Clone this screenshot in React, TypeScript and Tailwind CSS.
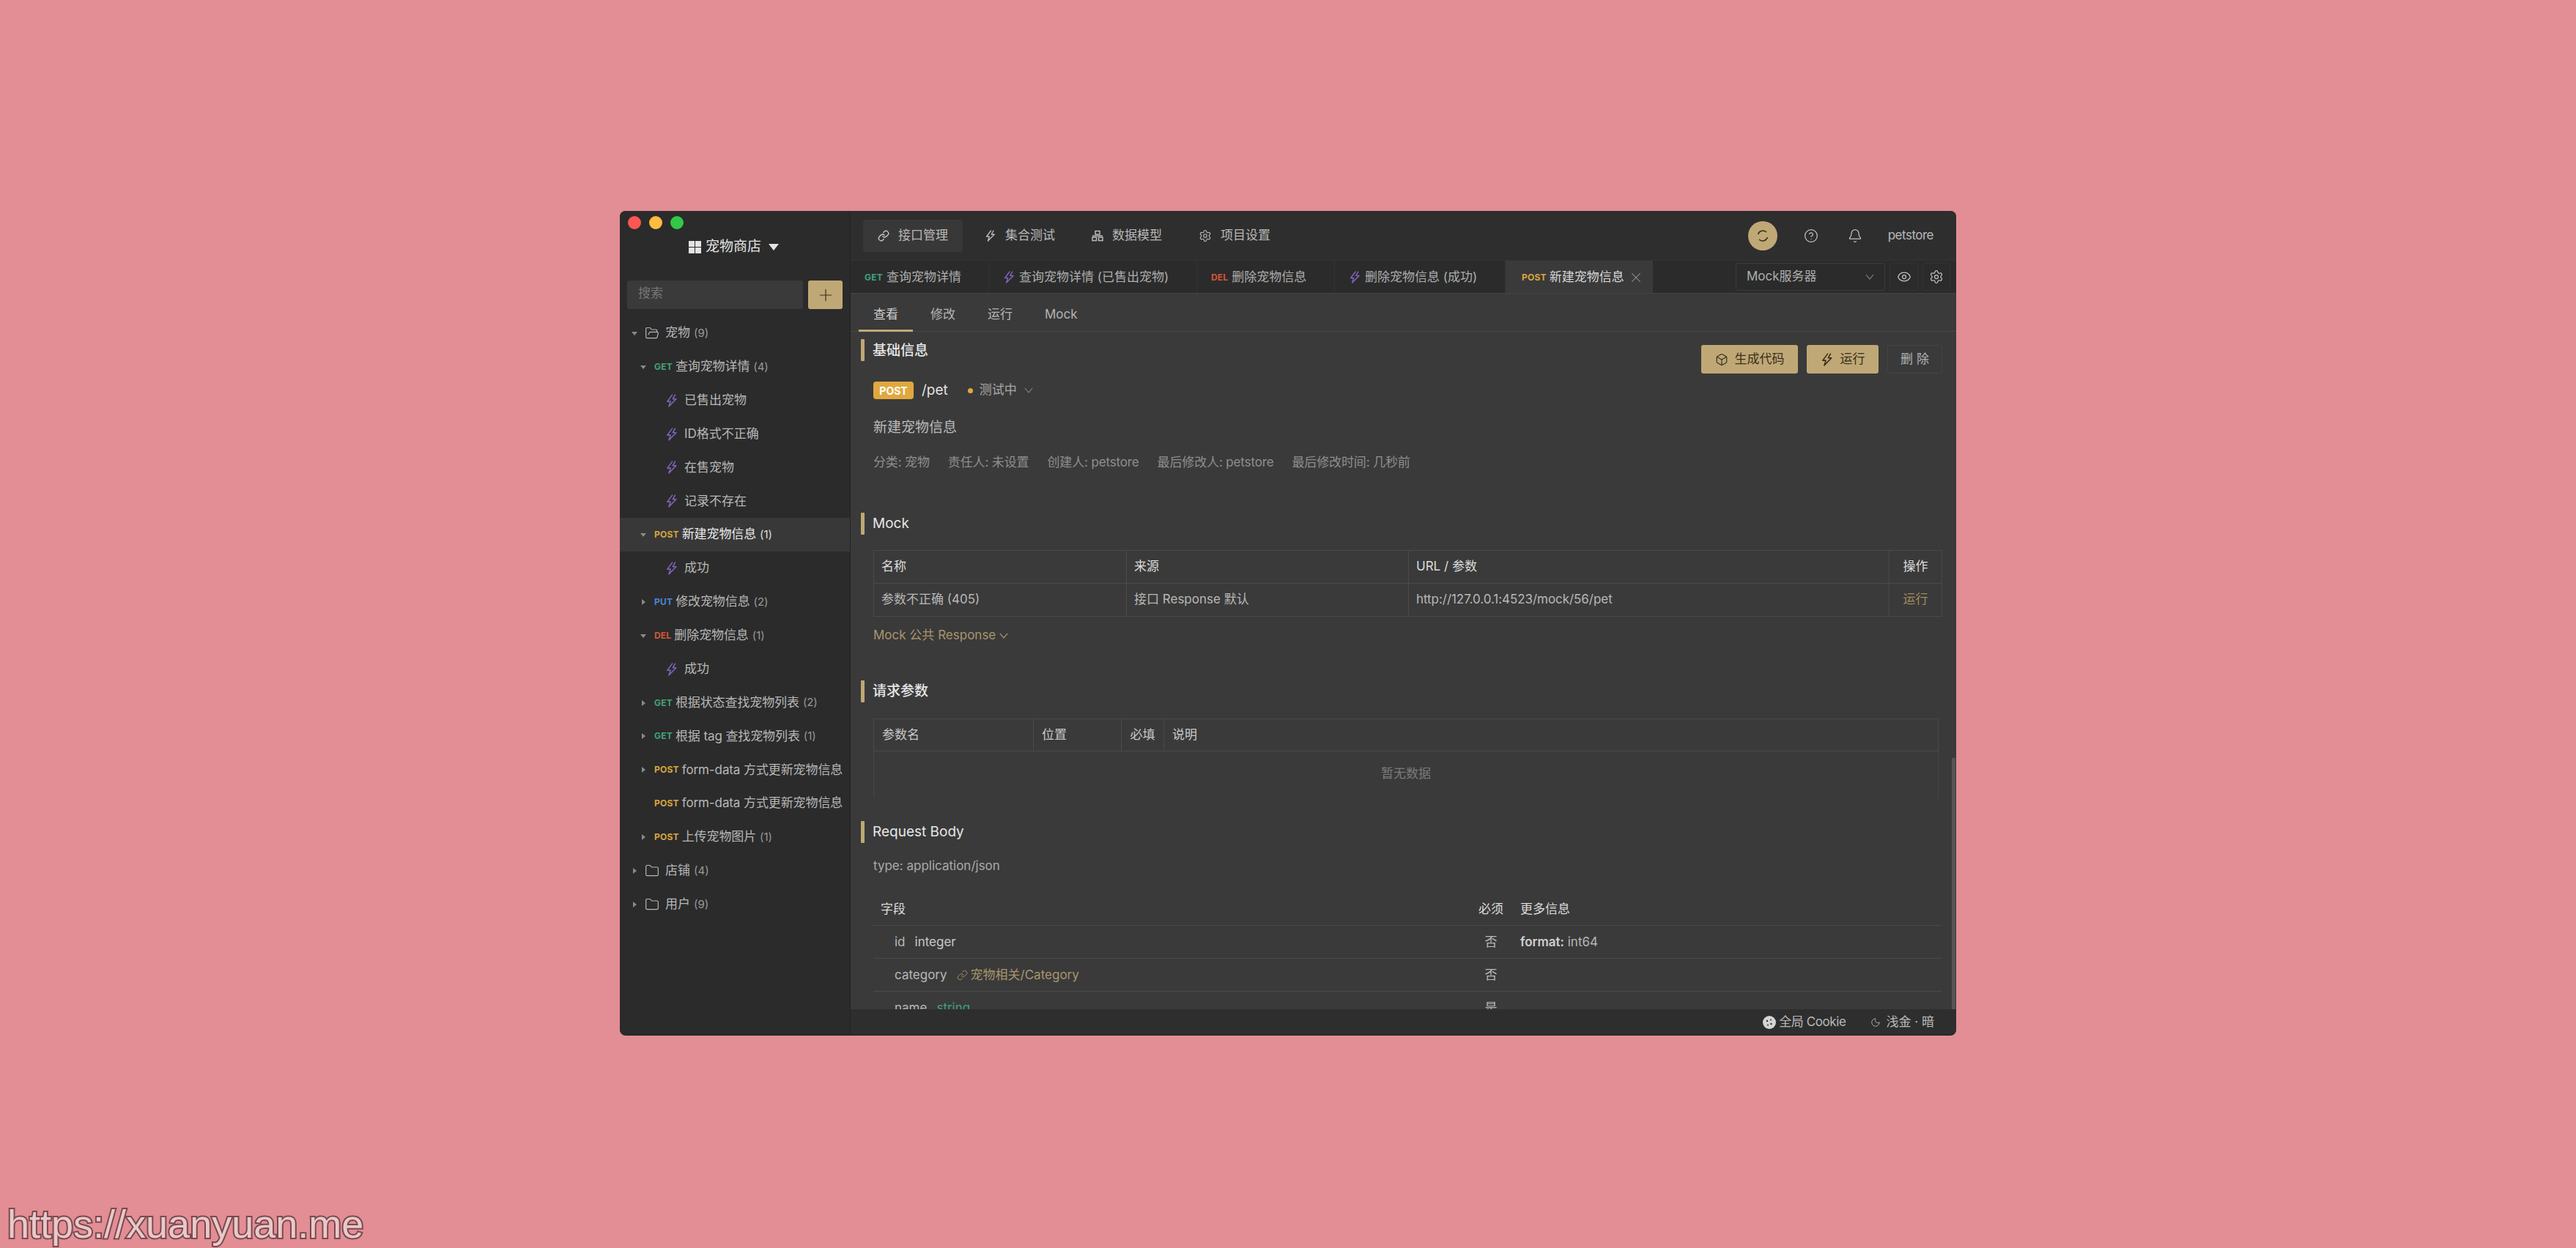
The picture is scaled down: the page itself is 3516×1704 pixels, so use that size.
import React from 'react';
import { Bell, Box, CircleHelp, Eye, Folder, FolderOpen, Link as LinkIcon, Moon, Plus, Settings, X } from 'lucide-react';

const METHOD_COLORS: Record<string, string> = {
    GET: 'text-[#3fa37c]',
    POST: 'text-[#d8a63f]',
    PUT: 'text-[#4a86d8]',
    DEL: 'text-[#d4553a]',
};

const Bolt: React.FC<{ className?: string }> = ({ className }) => (
    <svg className={className} viewBox="0 0 16 16" fill="none" stroke="currentColor" strokeWidth="1.4" strokeLinejoin="round" strokeLinecap="round">
        <path d="M8.5 1 2.5 9h3.8L4.4 15 13.2 6H9.2L12 1" />
    </svg>
);

const Chevron: React.FC<{ className?: string }> = ({ className }) => (
    <svg className={`w-[12px] h-[8px] shrink-0 ${className ?? ''}`} viewBox="0 0 12 8" fill="none" stroke="currentColor" strokeWidth="1.2">
        <path d="M.8.8 6 7 11.2.8" />
    </svg>
);

const Caret: React.FC<{ open: boolean }> = ({ open }) => (
    <svg className="w-[10px] h-[10px] text-[#8a8a8a] shrink-0" viewBox="0 0 10 10" fill="currentColor">
        {open ? <path d="M1 3h8L5 8z" /> : <path d="M3 1v8l5-4z" />}
    </svg>
);

const Method: React.FC<{ name: string }> = ({ name }) => (
    <span className={`text-[12px] font-bold tracking-[0.2px] shrink-0 ${METHOD_COLORS[name]}`}>{name}</span>
);

type SidebarRow =
    | { kind: 'folder'; name: string; count: number; open: boolean }
    | { kind: 'api'; method: string; name: string; count?: number; open?: boolean; active?: boolean }
    | { kind: 'case'; name: string };

const sidebarRows: SidebarRow[] = [
    { kind: 'folder', name: '宠物', count: 9, open: true },
    { kind: 'api', method: 'GET', name: '查询宠物详情', count: 4, open: true },
    { kind: 'case', name: '已售出宠物' },
    { kind: 'case', name: 'ID格式不正确' },
    { kind: 'case', name: '在售宠物' },
    { kind: 'case', name: '记录不存在' },
    { kind: 'api', method: 'POST', name: '新建宠物信息', count: 1, open: true, active: true },
    { kind: 'case', name: '成功' },
    { kind: 'api', method: 'PUT', name: '修改宠物信息', count: 2, open: false },
    { kind: 'api', method: 'DEL', name: '删除宠物信息', count: 1, open: true },
    { kind: 'case', name: '成功' },
    { kind: 'api', method: 'GET', name: '根据状态查找宠物列表', count: 2, open: false },
    { kind: 'api', method: 'GET', name: '根据 tag 查找宠物列表', count: 1, open: false },
    { kind: 'api', method: 'POST', name: 'form-data 方式更新宠物信息', open: false },
    { kind: 'api', method: 'POST', name: 'form-data 方式更新宠物信息' },
    { kind: 'api', method: 'POST', name: '上传宠物图片', count: 1, open: false },
    { kind: 'folder', name: '店铺', count: 4, open: false },
    { kind: 'folder', name: '用户', count: 9, open: false },
];

const Sidebar: React.FC = () => (
    <aside className="w-[314px] shrink-0 bg-[#2b2b2b] flex flex-col">
        <div className="flex gap-[11px] pt-[7px] pl-[11px]">
            <span className="w-[18px] h-[18px] rounded-full bg-[#fc5753]" />
            <span className="w-[18px] h-[18px] rounded-full bg-[#fdbc40]" />
            <span className="w-[18px] h-[18px] rounded-full bg-[#33c748]" />
        </div>
        <div className="mt-[12px] h-[24px] pl-[94px] flex items-center text-[19px] text-[#e4e4e4]">
            <svg className="w-[17px] h-[17px] mr-[6px]" viewBox="0 0 17 17" fill="currentColor">
                <rect width="8" height="8" />
                <rect x="9" width="8" height="8" />
                <rect y="9" width="8" height="8" />
                <rect x="9" y="9" width="8" height="8" />
            </svg>
            宠物商店
            <svg className="w-[14px] h-[10px] ml-[10px]" viewBox="0 0 14 10" fill="currentColor"><path d="M0 1h14L7 10z" /></svg>
        </div>
        <div className="mt-[34px] px-[10px] flex gap-[7px]">
            <div className="w-[241px] h-[39px] bg-[#3a3a3a] rounded-[3px] pl-[15px] pb-[3px] flex items-center text-[17px] text-[#777]">搜索</div>
            <div className="w-[47px] h-[39px] bg-[#bfa876] rounded-[3px] flex items-center justify-center text-[#3a2f1a]">
                <Plus size={26} strokeWidth={1.1} />
            </div>
        </div>
        <div className="mt-[10px] flex flex-col">
            {sidebarRows.map((row, i) => {
                if (row.kind === 'folder') {
                    const Icon = row.open ? FolderOpen : Folder;
                    return (
                        <div key={i} className="h-[45.88px] flex items-center pl-[15px] text-[17px] text-[#b8b8b8]">
                            <Caret open={row.open} />
                            <Icon className="w-[20px] h-[20px] ml-[9px] mr-[8px]" strokeWidth={1.4} />
                            {row.name}
                            <span className="ml-[5px] text-[15px] text-[#999]">({row.count})</span>
                        </div>
                    );
                }
                if (row.kind === 'api') {
                    return (
                        <div key={i} className={`h-[45.88px] flex items-center pl-[27px] whitespace-nowrap text-[17px] tracking-[-0.1px] ${row.active ? 'bg-[#383838] text-[#ececec]' : 'text-[#b8b8b8]'}`}>
                            {row.open === undefined ? <span className="w-[10px] shrink-0" /> : <Caret open={row.open} />}
                            <span className="ml-[10px] mr-[4px] flex"><Method name={row.method} /></span>
                            {row.name}
                            {row.count !== undefined && <span className={`ml-[5px] text-[15px] ${row.active ? 'text-[#ddd]' : 'text-[#999]'}`}>({row.count})</span>}
                        </div>
                    );
                }
                return (
                    <div key={i} className="h-[45.88px] flex items-center pl-[62px] text-[17px] text-[#b8b8b8]">
                        <Bolt className="w-[18px] h-[18px] text-[#7f63b8] mr-[8px]" />
                        {row.name}
                    </div>
                );
            })}
        </div>
    </aside>
);

const ModelIcon: React.FC = () => (
    <svg className="w-[16px] h-[16px]" viewBox="0 0 16 16" fill="none" stroke="currentColor" strokeWidth="1.5">
        <rect x="5" y="1.5" width="6" height="4.5" />
        <rect x="1" y="10" width="5.5" height="4.5" />
        <rect x="9.5" y="10" width="5.5" height="4.5" />
        <path d="M1 8h14" />
    </svg>
);

const navItems = [
    { label: '接口管理', icon: <LinkIcon size={16} strokeWidth={1.9} className="text-[#d0d0d0]" />, active: true },
    { label: '集合测试', icon: <Bolt className="w-[16px] h-[16px]" /> },
    { label: '数据模型', icon: <ModelIcon /> },
    { label: '项目设置', icon: <Settings size={18} strokeWidth={1.5} /> },
];

const TopBar: React.FC = () => (
    <div className="h-[67px] shrink-0 flex items-center pl-[17px] pr-[31px] bg-[#2e2e2e]">
        <div className="flex gap-[10px]">
            {navItems.map((item) => (
                <div key={item.label} className={`h-[44px] flex items-center gap-[12px] px-[20px] rounded-[4px] text-[17px] text-[#b9b9b9] ${item.active ? 'bg-[#383838]' : ''}`}>
                    {item.icon}
                    {item.label}
                </div>
            ))}
        </div>
        <div className="ml-auto flex items-center">
            <div className="w-[40px] h-[40px] rounded-full bg-[#bfa876] flex items-center justify-center">
                <svg className="w-[20px] h-[20px] text-[#3a2f1a]" viewBox="0 0 20 20" fill="none" stroke="currentColor" strokeWidth="1.5">
                    <path d="M3.5 8A7 7 0 0 1 15 5" />
                    <path d="M16.5 12A7 7 0 0 1 5 15" />
                </svg>
            </div>
            <CircleHelp className="ml-[36px] text-[#c4c4c4]" size={20} strokeWidth={1.5} />
            <Bell className="ml-[40px] text-[#c4c4c4]" size={20} strokeWidth={1.5} />
            <span className="ml-[35px] text-[17px] text-[#b9b9b9] tracking-[-0.5px]">petstore</span>
        </div>
    </div>
);

const tabs = [
    { method: 'GET', label: '查询宠物详情', width: 'w-[189px]' },
    { label: '查询宠物详情 (已售出宠物)', width: 'w-[284px]' },
    { method: 'DEL', label: '删除宠物信息', width: 'w-[188px]' },
    { label: '删除宠物信息 (成功)', width: 'w-[233px]' },
];

const TabBar: React.FC = () => (
    <div className="h-[45px] shrink-0 flex bg-[#2b2b2b] border-t border-[#333]">
        {tabs.map((tab) => (
            <div key={tab.label} className={`${tab.width} flex items-center pl-[19px] pt-[1px] gap-[5px] text-[17px] text-[#aeaeae] border-r border-[#333] whitespace-nowrap`}>
                {tab.method ? <Method name={tab.method} /> : <Bolt className="w-[17px] h-[17px] text-[#7f63b8]" />}
                {tab.label}
            </div>
        ))}
        <div className="w-[201px] flex items-center pl-[22px] pt-[1px] gap-[4px] text-[17px] text-[#d8d8d8] bg-[#3a3a3a] whitespace-nowrap">
            <Method name="POST" />
            新建宠物信息
            <X className="ml-[1px] text-[#9a9a9a]" size={22} strokeWidth={1.1} />
        </div>
        <div className="ml-auto flex items-center pr-[8px] gap-[6px]">
            <div className="w-[204px] h-[38px] border border-[#3c3c3c] rounded-[3px] pl-[14px] pr-[14px] flex items-center justify-between text-[17px] text-[#aeaeae]">
                Mock服务器
                <Chevron className="text-[#777]" />
            </div>
            <div className="w-[39px] h-[38px] border border-[#333] rounded-[3px] flex items-center justify-center text-[#c4c4c4]"><Eye size={20} strokeWidth={1.5} /></div>
            <div className="w-[38px] h-[38px] border border-[#333] rounded-[3px] flex items-center justify-center text-[#c4c4c4]"><Settings size={20} strokeWidth={1.5} /></div>
        </div>
    </div>
);

const SubTabs: React.FC = () => (
    <div className="h-[53px] shrink-0 flex items-stretch gap-[4px] pl-[11px] bg-[#3a3a3a] border-t border-[#444] border-b border-b-[#474747] text-[17px] text-[#b4b4b4]">
        <div className="px-[20px] pt-[8px] flex items-center text-[#d0d0d0] border-b-[3px] border-[#bfa876] -mb-[1px]">查看</div>
        <div className="px-[20px] pt-[7px] flex items-center">修改</div>
        <div className="px-[20px] pt-[7px] flex items-center">运行</div>
        <div className="px-[20px] pt-[7px] flex items-center">Mock</div>
    </div>
);

const SectionTitle: React.FC<{ children: React.ReactNode; weight?: string; offset?: string }> = ({ children, weight = 'font-medium', offset = '' }) => (
    <div className={`h-[30px] flex items-center gap-[11px] text-[19px] text-[#e6e6e6] whitespace-nowrap ${weight}`}>
        <span className="w-[5px] h-[30px] bg-[#bfa876] rounded-[1px]" />
        <span className={offset}>{children}</span>
    </div>
);

const Detail: React.FC = () => (
    <div className="flex-1 min-h-0 relative overflow-hidden bg-[#3a3a3a]">
        <div className="absolute right-[1px] top-[582px] bottom-0 w-[5px] bg-[#555]" />
        <div className="pt-[10px] pl-[14px] pr-[19px]">
            <div className="flex justify-between items-start h-[30px]">
                <SectionTitle offset="pt-[2px]">基础信息</SectionTitle>
                <div className="flex gap-[12px] mt-[8px] text-[17px]">
                    <div className="w-[132px] h-[39px] bg-[#bfa876] rounded-[3px] flex items-center justify-center gap-[9px] text-[#3a2f1a]">
                        <Box size={18} strokeWidth={1.6} />
                        生成代码
                    </div>
                    <div className="w-[98px] h-[39px] bg-[#bfa876] rounded-[3px] flex items-center justify-center gap-[9px] text-[#3a2f1a]">
                        <Bolt className="w-[18px] h-[18px]" />
                        运行
                    </div>
                    <div className="w-[75px] h-[39px] border border-[#444] rounded-[3px] flex items-center justify-center text-[#b4b4b4]">删 除</div>
                </div>
            </div>

            <div className="mt-[28px] ml-[17px] h-[24px] flex items-center whitespace-nowrap">
                <span className="w-[55px] h-[24px] rounded-[4px] bg-[#e0a83e] text-white text-[14px] font-bold flex items-center justify-center">POST</span>
                <span className="ml-[11px] text-[19px] text-[#e0e0e0]">/pet</span>
                <span className="ml-[27px] w-[7px] h-[7px] rounded-full bg-[#e0a83e]" />
                <span className="ml-[9px] text-[17px] text-[#a8a8a8]">测试中</span>
                <Chevron className="ml-[10px] text-[#777]" />
            </div>

            <div className="mt-[25px] ml-[17px] h-[28px] flex items-center text-[19px] text-[#bcbcbc]">新建宠物信息</div>

            <div className="mt-[22px] ml-[17px] h-[24px] flex items-center gap-[25px] text-[17px] text-[#8f8f8f] whitespace-nowrap tracking-[-0.14px]">
                <span>分类: 宠物</span>
                <span>责任人: 未设置</span>
                <span>创建人: petstore</span>
                <span>最后修改人: petstore</span>
                <span>最后修改时间: 几秒前</span>
            </div>

            <div className="mt-[56px]">
                <SectionTitle weight="font-normal">Mock</SectionTitle>
            </div>
            <table className="mt-[21px] ml-[17px] w-[1458px] table-fixed border-collapse text-[17px] text-[#b8b8b8]">
                <colgroup>
                    <col className="w-[345px]" />
                    <col className="w-[385px]" />
                    <col className="w-[656px]" />
                    <col className="w-[72px]" />
                </colgroup>
                <tbody>
                    <tr className="h-[45px] text-[#dcdcdc]">
                        <td className="border border-[#4a4a4a] pl-[10px]">名称</td>
                        <td className="border border-[#4a4a4a] pl-[10px]">来源</td>
                        <td className="border border-[#4a4a4a] pl-[10px]">URL / 参数</td>
                        <td className="border border-[#4a4a4a] text-center">操作</td>
                    </tr>
                    <tr className="h-[45px]">
                        <td className="border border-[#4a4a4a] pl-[10px]">参数不正确 (405)</td>
                        <td className="border border-[#4a4a4a] pl-[10px]">接口 Response 默认</td>
                        <td className="border border-[#4a4a4a] pl-[10px] tracking-[-0.05px]">http://127.0.0.1:4523/mock/56/pet</td>
                        <td className="border border-[#4a4a4a] text-center text-[#a08c5f]">运行</td>
                    </tr>
                </tbody>
            </table>
            <div className="mt-[14px] ml-[17px] h-[24px] flex items-center gap-[5px] text-[17px] text-[#a8966c]">
                Mock 公共 Response
                <Chevron />
            </div>

            <div className="mt-[49px]">
                <SectionTitle offset="pt-[1px]">请求参数</SectionTitle>
            </div>
            <div className="mt-[22px] ml-[17px] w-[1454px] text-[17px] text-[#c8c8c8]">
                <div className="h-[45px] flex border border-[#4a4a4a]">
                    <div className="w-[218px] border-r border-[#4a4a4a] pl-[11px] flex items-center">参数名</div>
                    <div className="w-[120px] border-r border-[#4a4a4a] pl-[11px] flex items-center">位置</div>
                    <div className="w-[58px] border-r border-[#4a4a4a] flex items-center justify-center">必填</div>
                    <div className="pl-[11px] flex items-center">说明</div>
                </div>
                <div className="h-[63px] pb-[2px] border-x border-[#454545] flex items-center justify-center text-[#7c7c7c]">暂无数据</div>
            </div>

            <div className="mt-[32px]">
                <SectionTitle weight="font-normal">Request Body</SectionTitle>
            </div>
            <div className="mt-[20px] ml-[17px] h-[24px] flex items-center text-[17px] text-[#aaa]">type: application/json</div>

            <div className="mt-[24px] ml-[17px] w-[1458px] text-[17px] text-[#b8b8b8]">
                <div className="h-[45px] pt-[1px] flex items-center border-b border-[#4a4a4a] text-[#dcdcdc]">
                    <div className="w-[819px] pl-[10px]">字段</div>
                    <div className="w-[48px] text-center">必须</div>
                    <div className="pl-[16px]">更多信息</div>
                </div>
                <div className="h-[45px] pt-[1px] flex items-center border-b border-[#4a4a4a]">
                    <div className="w-[819px] pl-[29px] flex gap-[13px]">
                        <span>id</span>
                        <span className="text-[#c8c8c8]">integer</span>
                    </div>
                    <div className="w-[48px] text-center">否</div>
                    <div className="pl-[16px]"><span className="font-semibold text-[#d0d0d0]">format:</span> int64</div>
                </div>
                <div className="h-[45px] pt-[1px] flex items-center border-b border-[#4a4a4a]">
                    <div className="w-[819px] pl-[29px] flex items-center gap-[13px]">
                        <span>category</span>
                        <span className="flex items-center gap-[4px] text-[#a8966c]">
                            <LinkIcon size={15} strokeWidth={1.5} />
                            宠物相关/Category
                        </span>
                    </div>
                    <div className="w-[48px] text-center">否</div>
                </div>
                <div className="h-[45px] pt-[1px] flex items-center border-b border-[#4a4a4a]">
                    <div className="w-[819px] pl-[29px] flex gap-[13px]">
                        <span>name</span>
                        <span className="text-[#3fa37c]">string</span>
                    </div>
                    <div className="w-[48px] text-center">是</div>
                </div>
            </div>
        </div>
    </div>
);

const StatusBar: React.FC = () => (
    <div className="h-[34px] pt-[2px] shrink-0 bg-[#2e2e2e] flex items-center justify-end pr-[30px] text-[17px] text-[#b9b9b9] whitespace-nowrap">
        <svg className="w-[18px] h-[18px] mr-[4px]" viewBox="0 0 18 18">
            <circle cx="9" cy="9" r="9" fill="#d4d4d4" />
            <circle cx="6" cy="7" r="1.2" fill="#2e2e2e" />
            <circle cx="11" cy="5.5" r="1" fill="#2e2e2e" />
            <circle cx="11.5" cy="11" r="1.2" fill="#2e2e2e" />
            <circle cx="7" cy="12.5" r="1" fill="#2e2e2e" />
        </svg>
        <span className="tracking-[-0.4px]">全局 Cookie</span>
        <Moon className="ml-[33px] mr-[8px]" size={14} strokeWidth={1.5} />
        浅金 · 暗
    </div>
);

export default function App() {
    return (
        <div className="relative w-[3516px] h-[1704px] bg-[#e38d94] pl-[846px] pt-[288px] overflow-hidden font-['Inter','Noto_Sans_CJK_SC',sans-serif]">
            <div className="w-[1824px] h-[1126px] flex rounded-[8px] overflow-hidden bg-[#2b2b2b] border-b-2 border-[#25282c]">
                <Sidebar />
                <main className="flex-1 min-w-0 flex flex-col border-l border-[#242424]">
                    <TopBar />
                    <TabBar />
                    <SubTabs />
                    <Detail />
                    <StatusBar />
                </main>
            </div>
            <div className="absolute left-[10px] bottom-[6px] text-[54px] leading-none font-['Liberation_Sans',sans-serif] text-[#e9c8ca] [-webkit-text-stroke:4px_#7a4a4e] [paint-order:stroke_fill]">https://xuanyuan.me</div>
        </div>
    );
}
